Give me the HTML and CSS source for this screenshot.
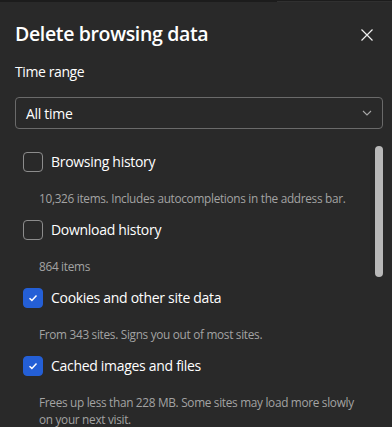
FILE: index.html
```html
<!DOCTYPE html>
<html lang="en">
<head>
<meta charset="utf-8">
<title>Delete browsing data</title>
<link rel="stylesheet" href="styles.css">
</head>
<body>
<div class="topstrip"><div class="topstrip-right"></div></div>
<div class="dialog">
  <div class="header">
    <h1 class="title">Delete browsing data</h1>
    <button class="close" aria-label="Close">
      <svg width="12" height="12" viewBox="0 0 12 12"><path d="M0.5 0.5 L11.5 11.5 M11.5 0.5 L0.5 11.5" stroke="#f0f0f0" stroke-width="1.2" fill="none"/></svg>
    </button>
  </div>
  <div class="label">Time range</div>
  <div class="select">
    <span class="select-value">All time</span>
    <svg class="chevron" width="10" height="6" viewBox="0 0 10 6"><path d="M1 1 L5 5 L9 1" stroke="#a8a8a8" stroke-width="1.1" fill="none"/></svg>
  </div>
  <div class="list">
    <div class="item">
      <div class="row"><span class="box"></span><span class="name">Browsing history</span></div>
      <div class="desc">10,326 items. Includes autocompletions in the address bar.</div>
    </div>
    <div class="item">
      <div class="row"><span class="box"></span><span class="name">Download history</span></div>
      <div class="desc">864 items</div>
    </div>
    <div class="item">
      <div class="row"><span class="box checked"><svg width="10" height="8" viewBox="0 0 10 8"><path d="M1.5 4.2 L3.9 6.4 L8.5 1.6" stroke="#fff" stroke-width="1.5" fill="none"/></svg></span><span class="name">Cookies and other site data</span></div>
      <div class="desc">From 343 sites. Signs you out of most sites.</div>
    </div>
    <div class="item">
      <div class="row"><span class="box checked"><svg width="10" height="8" viewBox="0 0 10 8"><path d="M1.5 4.2 L3.9 6.4 L8.5 1.6" stroke="#fff" stroke-width="1.5" fill="none"/></svg></span><span class="name">Cached images and files</span></div>
      <div class="desc">Frees up less than 228 MB. Some sites may load more slowly on your next visit.</div>
    </div>
    <div class="scrollbar"></div>
  </div>
</div>
</body>
</html>
```
FILE: styles.css
```css
html, body {
  margin: 0;
  padding: 0;
  background: #292929;
  height: 100%;
  overflow: hidden;
}
body {
  font-family: "Open Sans", "Noto Sans", sans-serif;
  color: #ffffff;
}
.topstrip {
  height: 2px;
  background: #1c1c1c;
  display: flex;
  justify-content: flex-end;
}
.topstrip-right {
  width: 115px;
  height: 1px;
  margin-top: 1px;
  background: #303030;
}
.dialog {
  padding: 18px 9px 0 15px;
}
.header {
  display: flex;
  align-items: center;
  justify-content: space-between;
  height: 28px;
}
.title {
  margin: 0;
  font-size: 19.5px;
  font-weight: 600;
  line-height: 28px;
  letter-spacing: -0.35px;
}
.close {
  background: none;
  border: 0;
  padding: 0;
  margin: 2px 10px 0 0;
  width: 12px;
  height: 12px;
  display: flex;
}
.label {
  margin-top: 14px;
  font-size: 14px;
  line-height: 20px;
  letter-spacing: -0.4px;
}
.select {
  margin-top: 15px;
  height: 30px;
  border: 1px solid #6a6a6a;
  border-radius: 4px;
  display: flex;
  align-items: center;
  justify-content: space-between;
  padding: 0 10px 0 10px;
}
.select-value {
  font-size: 14px;
  letter-spacing: -0.3px;
}
.list {
  position: relative;
  margin-top: 23px;
  padding-left: 8px;
}
.item {
  margin-bottom: 13px;
}
.row {
  display: flex;
  align-items: center;
  height: 20px;
  gap: 8px;
}
.box {
  width: 18px;
  height: 18px;
  border: 1px solid #8c8c8c;
  border-radius: 4px;
  display: flex;
  align-items: center;
  justify-content: center;
  flex: none;
}
.box.checked {
  background: #245fd6;
  border-color: #245fd6;
}
.name {
  font-size: 14px;
  line-height: 20px;
  letter-spacing: -0.3px;
}
.desc {
  margin-top: 18px;
  padding-left: 16px;
  padding-right: 20px;
  font-size: 11.8px;
  line-height: 17px;
  letter-spacing: -0.3px;
  color: #a3a3a3;
}
.scrollbar {
  position: absolute;
  top: -6px;
  right: 0;
  width: 8px;
  height: 131px;
  border-radius: 4px;
  background: #b9b9b9;
}
```
